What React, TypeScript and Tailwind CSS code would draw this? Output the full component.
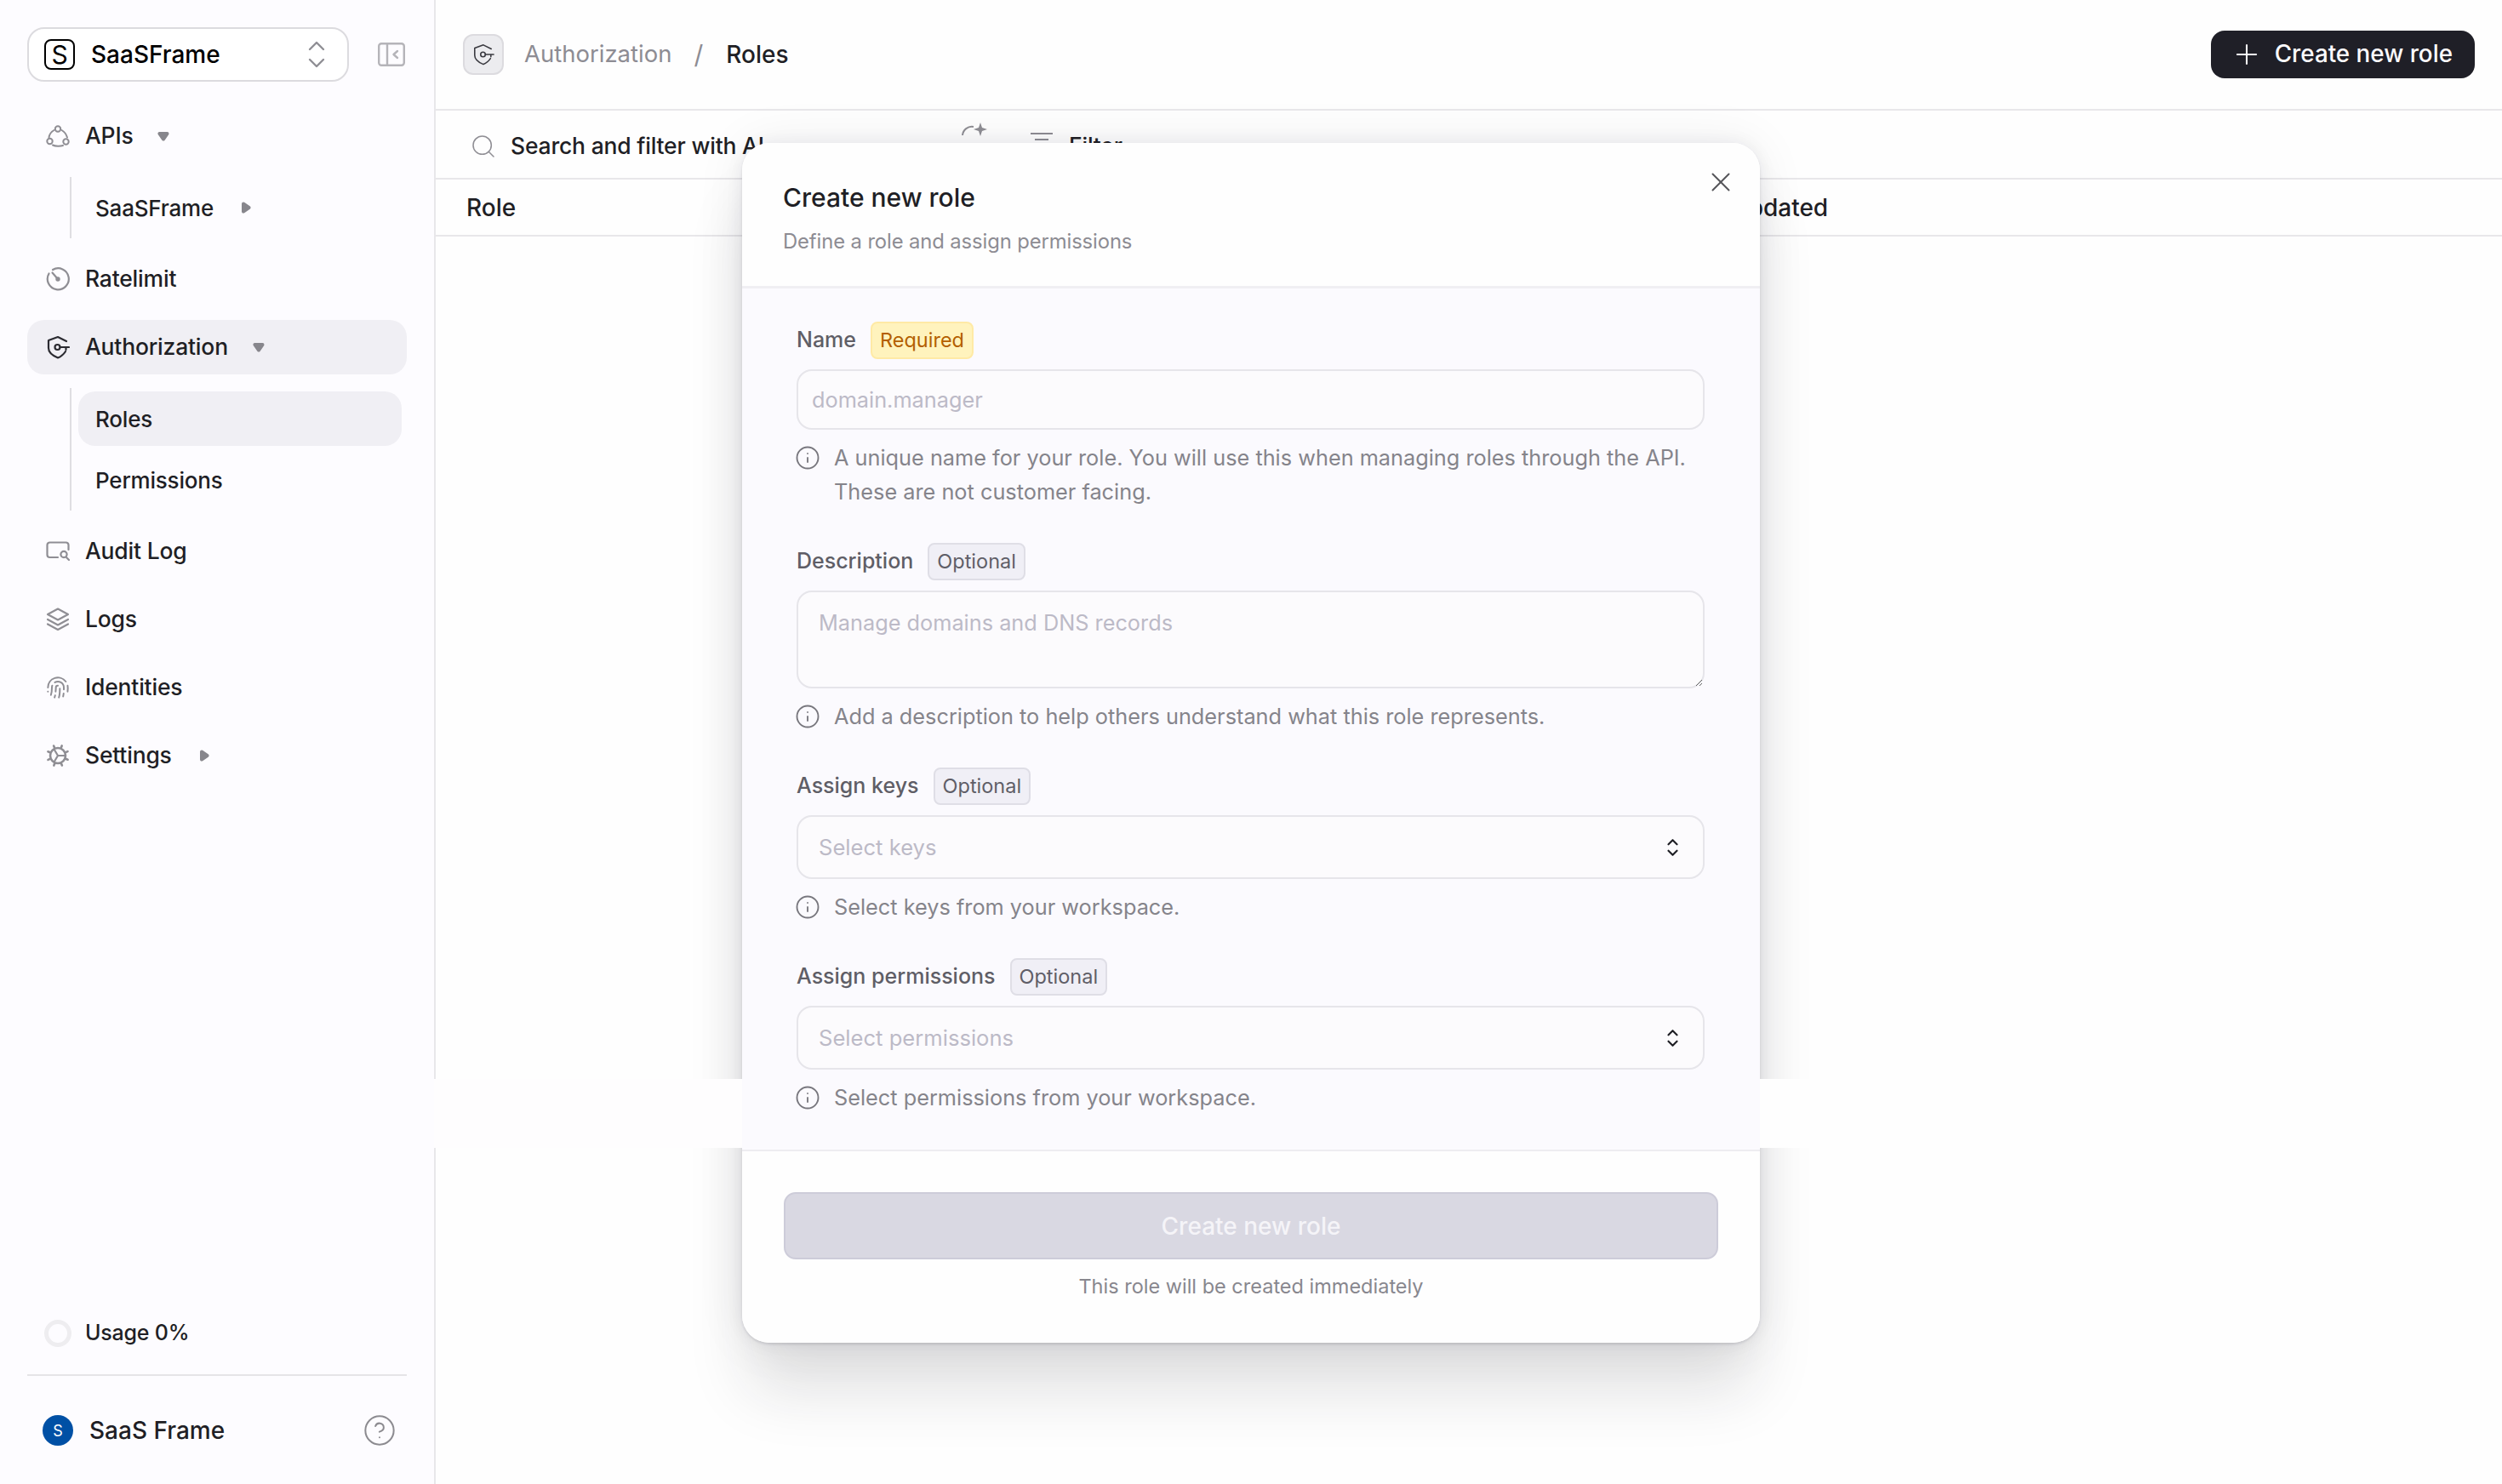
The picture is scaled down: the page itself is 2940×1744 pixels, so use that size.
import React from "react";
import { Fingerprint, CircleHelp, Info, Search, Plus, X } from "lucide-react";

const gray = "#8f8e94";

function ApisIcon() {
  return (
    <svg width="28" height="28" viewBox="0 0 28 28" fill="none" stroke={gray} strokeWidth="2" strokeLinecap="round">
      <circle cx="14" cy="5.5" r="3.2" />
      <circle cx="4.5" cy="20" r="3.2" />
      <circle cx="23.5" cy="20.5" r="3.2" />
      <path d="M9.5 7 C6 9 4 12 3.5 15.5" />
      <path d="M18.5 7 C22 9 24 12 25 15.5" />
      <path d="M8 24.5 C11 26 17 26 20 25" />
    </svg>
  );
}
function GaugeIcon() {
  return (
    <svg width="28" height="28" viewBox="0 0 28 28" fill="none" stroke={gray} strokeWidth="2.2" strokeLinecap="round">
      <path d="M8 3 A12.5 12.5 0 1 1 3.5 7.5" />
      <path d="M7.5 6.5 L14 14" />
      <circle cx="14" cy="14" r="1.6" fill={gray} />
    </svg>
  );
}
function ShieldKey({ size = 28, color = "#2b2b31", sw = 2.2 }: { size?: number; color?: string; sw?: number }) {
  return (
    <svg width={size} height={size} viewBox="0 0 28 28" fill="none" stroke={color} strokeWidth={sw} strokeLinecap="round" strokeLinejoin="round">
      <path d="M24 7 L14 2 L3 6 V15 C3 20 8 24 14 26.5 C18 25 21 22 23 19" />
      <circle cx="13.5" cy="14" r="3" />
      <path d="M16.5 14 H27 M23.5 14 V17" />
    </svg>
  );
}
function AuditIcon() {
  return (
    <svg width="28" height="24" viewBox="0 0 28 24" fill="none" stroke={gray} strokeWidth="2.2" strokeLinecap="round">
      <path d="M14 19 H4.5 a3 3 0 0 1 -3 -3 V4.5 a3 3 0 0 1 3 -3 H23.5 a3 3 0 0 1 3 3 V10" />
      <circle cx="21" cy="15.5" r="3.6" />
      <path d="M24 19 L27 22" />
    </svg>
  );
}
function LayersIcon() {
  return (
    <svg width="28" height="28" viewBox="0 0 28 28" fill="none" stroke={gray} strokeWidth="2.2" strokeLinejoin="round" strokeLinecap="round">
      <path d="M14 1.5 L26 8 L14 14.5 L2 8 Z" />
      <path d="M2 14 L14 20.5 L26 14" />
      <path d="M2 19.5 L14 26 L26 19.5" />
    </svg>
  );
}
function GearIcon() {
  const teeth = [0, 45, 90, 135, 180, 225, 270, 315];
  return (
    <svg width="28" height="28" viewBox="0 0 28 28" fill="none" stroke={gray} strokeWidth="2.6" strokeLinecap="round">
      <circle cx="14" cy="14" r="9" />
      {teeth.map((a) => (
        <path key={a} d="M14 4 V1.5" transform={`rotate(${a + 22} 14 14)`} />
      ))}
      <path d="M9.5 6.5 L14 14 L9.5 21.5 M14 14 H23" strokeWidth="2.2" />
    </svg>
  );
}
function Caret({ dir }: { dir: "down" | "right" }) {
  return dir === "down" ? (
    <svg width="16" height="12" viewBox="0 0 16 12" fill="#87868c" stroke="#87868c" strokeWidth="4" strokeLinejoin="round">
      <path d="M3.5 3 H12.5 L8 9.5 Z" />
    </svg>
  ) : (
    <svg width="12" height="16" viewBox="0 0 12 16" fill="#87868c" stroke="#87868c" strokeWidth="4" strokeLinejoin="round">
      <path d="M3 3.5 L9.5 8 L3 12.5 Z" />
    </svg>
  );
}
function Chevrons({ w, h, sw, color }: { w: number; h: number; sw: number; color: string }) {
  return (
    <svg width={w} height={h} viewBox="0 0 20 32" fill="none" stroke={color} strokeWidth={sw} strokeLinecap="round" strokeLinejoin="round">
      <path d="M2 10 L10 2 L18 10" />
      <path d="M2 22 L10 30 L18 22" />
    </svg>
  );
}

function NavRow({ icon, label, caret, active, className }: { icon: React.ReactNode; label: string; caret?: "down" | "right"; active?: boolean; className: string }) {
  return (
    <div className={`flex h-[64px] shrink-0 items-center rounded-[20px] pl-[22px] ${active ? "bg-[#f0eff4]" : ""} ${className}`}>
      <span className="flex w-[28px] shrink-0 items-center justify-center">{icon}</span>
      <span className="ml-[18px] text-[26.5px] font-medium tracking-[-0.2px] text-[#1f1f25]">{label}</span>
      {caret ? (
        <span className={caret === "down" ? "ml-[28px] flex" : "ml-[32px] flex"}>
          <Caret dir={caret} />
        </span>
      ) : null}
    </div>
  );
}

function SubRow({ label, caret, active, className }: { label: string; caret?: boolean; active?: boolean; className?: string }) {
  return (
    <div className={`ml-[8px] flex h-[64px] w-[380px] shrink-0 items-center rounded-[20px] pl-[20px] ${active ? "bg-[#f0eff4]" : ""} ${className ?? ""}`}>
      <span className="text-[26px] font-medium tracking-[-0.2px] text-[#1f1f25]">{label}</span>
      {caret ? (
        <span className="ml-[32px] flex">
          <Caret dir="right" />
        </span>
      ) : null}
    </div>
  );
}

function Sidebar() {
  return (
    <aside className="flex h-[1744px] w-[512px] shrink-0 flex-col border-r-2 border-[#e8e7ea] bg-[#fdfcff] px-[32px] pb-[43px] pt-[32px]">
      <div className="flex shrink-0 items-center">
        <div className="flex h-[64px] w-[378px] items-center rounded-[20px] border-2 border-[#dcdbdf] bg-white pl-[18px] pr-[26px]">
          <span className="flex h-[36px] w-[36px] items-center justify-center rounded-[8px] border-2 border-black bg-white text-[30px] leading-none text-black">S</span>
          <span className="ml-[19px] text-[28px] font-medium text-black">SaaSFrame</span>
          <span className="ml-auto flex">
            <Chevrons w={20} h={32} sw={2.4} color="#8f8e94" />
          </span>
        </div>
        <svg className="ml-[34px]" width="32" height="28" viewBox="0 0 32 28" fill="none" stroke="#b5b4b9" strokeWidth="2.4" strokeLinecap="round" strokeLinejoin="round">
          <rect x="1.2" y="1.2" width="29.6" height="25.6" rx="3" />
          <path d="M11 1.5 V26.5" />
          <path d="M23 10 L18.5 14 L23 18" />
        </svg>
      </div>

      <NavRow className="mt-[32px]" icon={<ApisIcon />} label="APIs" caret="down" />
      <div className="ml-[50px] mt-[16px] flex h-[72px] shrink-0 items-center border-l-2 border-[#dfdee2]">
        <SubRow label="SaaSFrame" caret className="w-auto" />
      </div>
      <NavRow className="mt-[16px]" icon={<GaugeIcon />} label="Ratelimit" />
      <NavRow className="mt-[16px]" active icon={<ShieldKey />} label="Authorization" caret="down" />
      <div className="ml-[50px] mt-[16px] flex h-[144px] shrink-0 flex-col border-l-2 border-[#dfdee2] pt-[4px]">
        <SubRow label="Roles" active />
        <SubRow label="Permissions" className="mt-[8px]" />
      </div>
      <NavRow className="mt-[16px]" icon={<AuditIcon />} label="Audit Log" />
      <NavRow className="mt-[16px]" icon={<LayersIcon />} label="Logs" />
      <NavRow className="mt-[16px]" icon={<Fingerprint size={32} color={gray} strokeWidth={1.7} />} label="Identities" />
      <NavRow className="mt-[16px]" icon={<GearIcon />} label="Settings" caret="right" />

      <div className="mt-auto flex h-[40px] shrink-0 items-center pl-[20px]">
        <span className="h-[32px] w-[32px] rounded-full border-[5px] border-[#eeedf0]" />
        <span className="ml-[16px] text-[25px] font-medium tracking-[-0.2px] text-[#1f1f25]">Usage 0%</span>
      </div>
      <div className="mt-[28px] h-[2px] shrink-0 bg-[#e5e4e7]" />
      <div className="mt-[44px] flex h-[40px] shrink-0 items-center pl-[18px] pr-[12px]">
        <span className="flex h-[36px] w-[36px] items-center justify-center rounded-full bg-[#0050a5] text-[18px] text-white">S</span>
        <span className="ml-[19px] text-[28px] font-medium text-[#1f1f25]">SaaS Frame</span>
        <CircleHelp className="ml-auto" size={40} color="#8c8b90" strokeWidth={1.2} />
      </div>
    </aside>
  );
}

function Main() {
  return (
    <main className="flex h-[1744px] flex-1 flex-col bg-[#fefefe]">
      <header className="flex h-[130px] shrink-0 items-center border-b-2 border-[#e8e7ea] pl-[32px] pr-[32px]">
        <span className="flex h-[48px] w-[48px] items-center justify-center rounded-[12px] border-2 border-[#dcdbdf] bg-[#ececef]">
          <ShieldKey size={26} color="#3a3a40" sw={1.7} />
        </span>
        <span className="ml-[24px] text-[27.5px] text-[#8d8c93]">Authorization</span>
        <span className="ml-[26px] text-[30px] text-[#8d8c93]">/</span>
        <span className="ml-[27px] text-[28px] font-medium text-[#1f1f25]">Roles</span>
        <button className="ml-auto flex h-[56px] items-center rounded-[16px] bg-[#1f1f27] pl-[23px] pr-[26px] text-[27.8px] font-medium text-[#fbfafd]">
          <Plus size={38} strokeWidth={1.3} />
          <span className="ml-[14px]">Create new role</span>
        </button>
      </header>
      <div className="flex h-[81px] shrink-0 items-center border-b-2 border-[#e8e7ea] pl-[40px] pt-[4px]">
        <Search size={32} color="#8f8e94" strokeWidth={1.15} />
        <span className="ml-[16px] w-[528px] text-[26.5px] font-medium tracking-[-0.2px] text-[#1f1f25]">Search and filter with AI</span>
        <svg className="-translate-y-[14px]" width="34" height="30" viewBox="0 0 34 30" fill="none" stroke="#8f8e94" strokeWidth="2">
          <path d="M3 16 A11 11 0 0 1 16 6" />
          <path d="M24 1 L26 7 L32 9 L26 11 L24 17 L22 11 L16 9 L22 7 Z" fill="#8f8e94" stroke="none" />
        </svg>
        <svg className="ml-[49px] -translate-y-[8px]" width="26" height="18" viewBox="0 0 26 18" fill="none" stroke="#8f8e94" strokeWidth="2">
          <path d="M0 2 H26 M5 9 H21 M10 16 H16" />
        </svg>
        <span className="ml-[19px] text-[26.5px] font-medium tracking-[-0.2px] text-[#1f1f25]">Filter</span>
      </div>
      <div className="flex h-[67px] shrink-0 items-center border-b-2 border-[#e8e7ea] pl-[36px] text-[28px] font-medium text-[#1f1f25]">
        <span className="w-[1426px] shrink-0">Role</span>
        <span>Last updated</span>
      </div>
    </main>
  );
}

function Badge({ children, required }: { children: React.ReactNode; required?: boolean }) {
  return (
    <span
      className={`ml-[17px] flex h-[44px] items-center rounded-[8px] border-2 px-[9px] text-[23.5px] ${
        required ? "border-[#ffeaa5] bg-[#fff3bd] text-[#b35f00]" : "border-[#dfdee6] bg-[#f0eff6] text-[#5f5e67]"
      }`}
    >
      {children}
    </span>
  );
}

function Label({ text, badge }: { text: string; badge: React.ReactNode }) {
  return (
    <div className="flex h-[44px] items-center">
      <span className="text-[25px] font-medium text-[#5f5e66]">{text}</span>
      {badge}
    </div>
  );
}

function Hint({ children, className }: { children: React.ReactNode; className?: string }) {
  return (
    <div className={`flex items-start text-[25.3px] leading-[40px] text-[#85848b] ${className ?? ""}`}>
      <Info className="-ml-[2px] mt-[5px] shrink-0" size={30} strokeWidth={1.5} color="#78777e" />
      <span className="ml-[16px]">{children}</span>
    </div>
  );
}

function SelectBox({ text, className }: { text: string; className?: string }) {
  return (
    <div className={`mt-[12px] flex h-[75px] shrink-0 items-center rounded-[18px] border-2 border-[#e6e5ea] bg-[#fcfbfd] pb-[0px] pl-[24px] pr-[29px] pt-[1px] ${className ?? ""}`}>
      <span className="text-[25.6px] text-[#bcbac7]">{text}</span>
      <span className="ml-auto flex">
        <Chevrons w={13} h={20} sw={3.4} color="#1f1f25" />
      </span>
    </div>
  );
}

function Modal() {
  return (
    <section className="absolute left-[872px] top-[168px] z-10 flex h-[1410px] w-[1196px] flex-col overflow-hidden rounded-[32px]">
      <div className="relative h-[171px] shrink-0 border-b-[3px] border-[#f0eff3] bg-[#fefefe] pl-[48px] pt-[44px]">
        <h2 className="text-[30px] font-medium leading-[40px] text-[#1f1f25]">Create new role</h2>
        <p className="mt-[12px] text-[23.8px] tracking-[-0.1px] leading-[40px] text-[#8d8c93]">Define a role and assign permissions</p>
        <X className="absolute right-[27px] top-[27px]" size={38} color="#55555a" strokeWidth={1.25} />
      </div>
      <div className="flex flex-1 flex-col bg-[#fbfafe] pl-[64px] pr-[65px] pt-[39px]">
        <Label text="Name" badge={<Badge required>Required</Badge>} />
        <input
          readOnly
          placeholder="domain.manager"
          className="mt-[12px] h-[71px] w-full shrink-0 rounded-[18px] border-2 border-[#e6e5ea] bg-[#fcfbfd] pl-[16px] text-[25.3px] outline-none placeholder:text-[#bcbac7]"
        />
        <Hint className="mt-[13px]">
          A unique name for your role. You will use this when managing roles through the API.
          <br />
          These are not customer facing.
        </Hint>
        <div className="mt-[40px]">
          <Label text="Description" badge={<Badge>Optional</Badge>} />
        </div>
        <textarea
          readOnly
          placeholder="Manage domains and DNS records"
          className="mt-[12px] block h-[115px] w-full shrink-0 rounded-[18px] border-2 border-[#e6e5ea] bg-[#fcfbfd] px-[24px] pt-[17px] text-[25.3px] outline-none placeholder:text-[#bcbac7]"
        />
        <Hint className="mt-[13px]">Add a description to help others understand what this role represents.</Hint>
        <div className="mt-[40px]">
          <Label text="Assign keys" badge={<Badge>Optional</Badge>} />
        </div>
        <SelectBox text="Select keys" />
        <Hint className="mt-[13px]">Select keys from your workspace.</Hint>
        <div className="mt-[40px]">
          <Label text="Assign permissions" badge={<Badge>Optional</Badge>} />
        </div>
        <SelectBox text="Select permissions" />
        <Hint className="mt-[13px]">Select permissions from your workspace.</Hint>
      </div>
      <div className="h-[227px] shrink-0 border-t-2 border-[#eeedf1] bg-[#fefefe] px-[49px] pt-[48px]">
        <button className="flex h-[79px] w-full items-center justify-center rounded-[14px] border-2 border-[#cdccd9] bg-[#d9d8e2] text-[28px] font-medium text-[#f5f4f8]">
          Create new role
        </button>
        <p className="mt-[16px] text-center text-[23.5px] leading-[32px] text-[#88878e]">This role will be created immediately</p>
      </div>
    </section>
  );
}

export default function App() {
  return (
    <div className="relative flex h-[1744px] w-[2940px] overflow-hidden bg-[#fefefe] font-['Inter',sans-serif]">
      <Sidebar />
      <Main />
      <div className="absolute left-[872px] top-[168px] h-[1410px] w-[1196px] rounded-[32px] shadow-[0_64px_72px_-8px_rgba(30,30,40,0.13),0_0_60px_0_rgba(30,30,40,0.07),0_0_20px_0_rgba(30,30,40,0.07),0_2px_3px_0_rgba(30,30,40,0.12)]" />
      <div className="absolute left-[510px] top-[1268px] h-[81px] w-[362px] bg-[#fefdfe]" />
      <div className="absolute left-[2068px] top-[1268px] h-[81px] w-[110px] bg-[#fefefe]" />
      <Modal />
    </div>
  );
}
